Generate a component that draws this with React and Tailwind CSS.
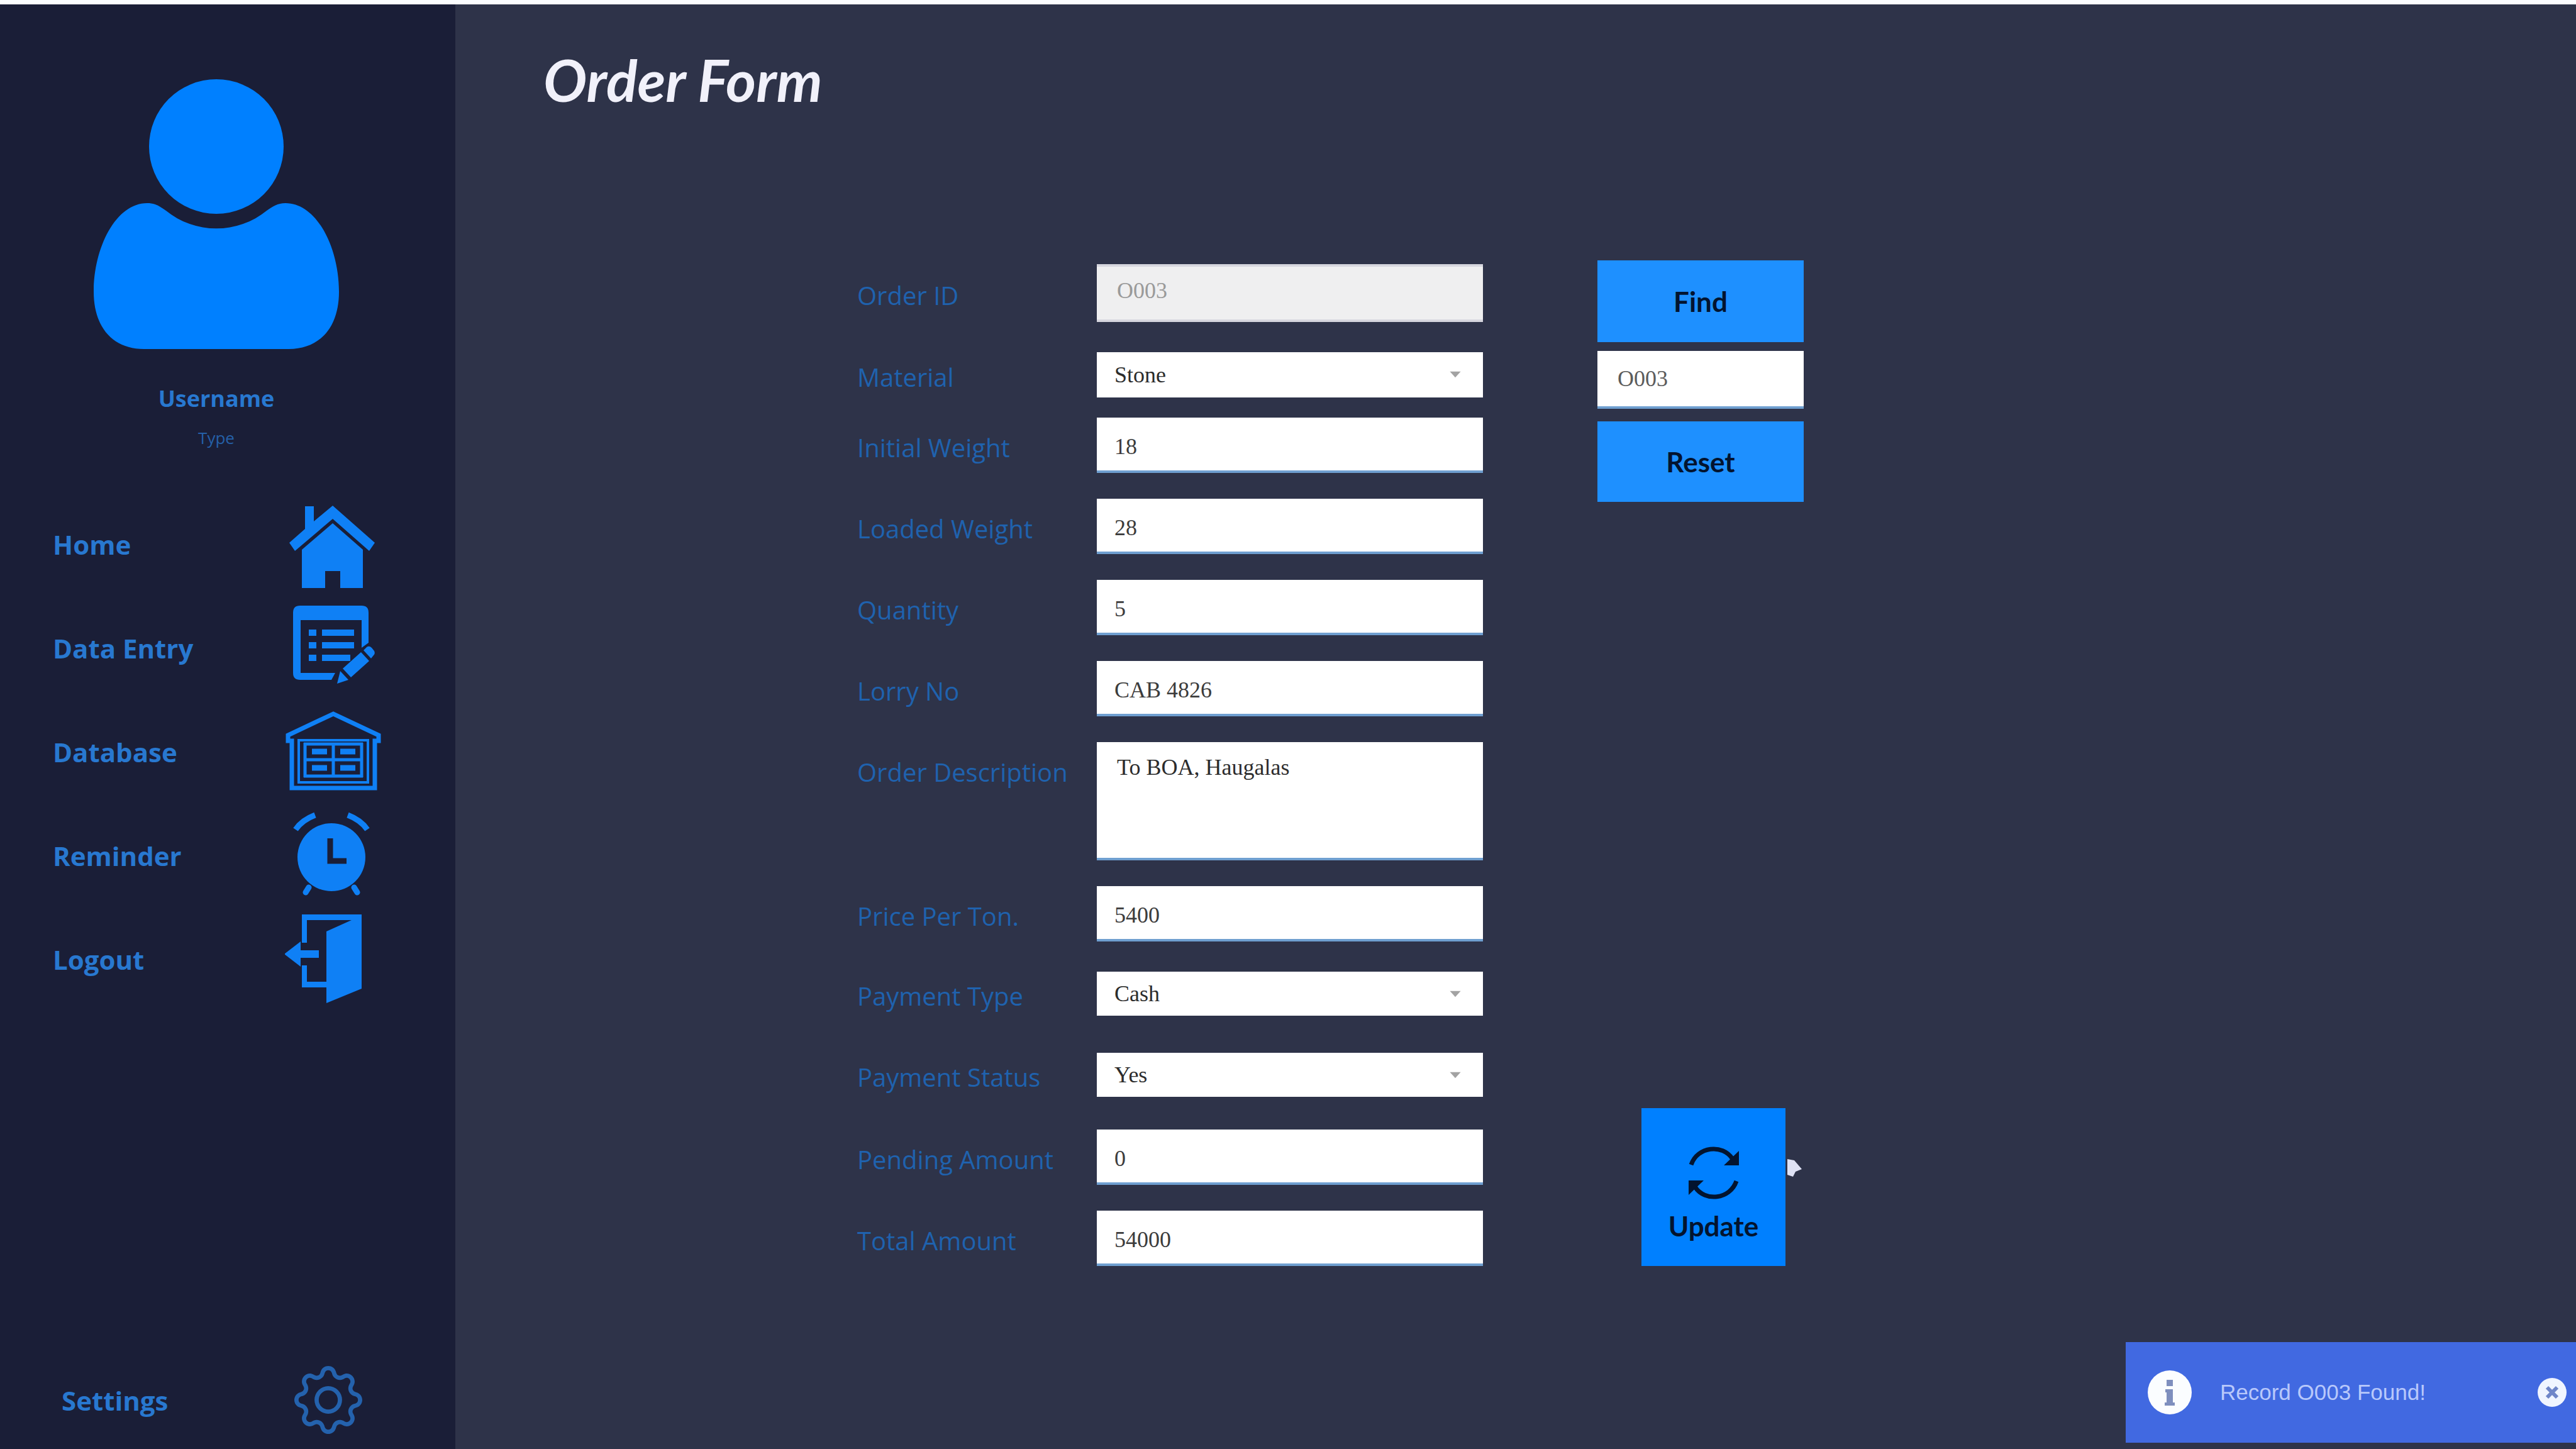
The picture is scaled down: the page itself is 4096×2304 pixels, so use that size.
import React from "react";
import { BsGear } from "react-icons/bs";

const INPUT =
  "h-[88px] w-full border-b-4 border-[#6f9fd0] bg-white px-7 pt-2 font-['Liberation_Serif'] text-[36px] text-[#3c3c3c] outline-none";
const SELECT =
  "w-full appearance-none bg-white px-7 font-['Liberation_Serif'] text-[36px] leading-[40px] text-[#2c2c2c] outline-none";

function HomeIcon() {
  return (
    <svg viewBox="0 0 150 150" className="size-[150px]" fill="currentColor" aria-hidden="true">
      <path d="M76 13 L143 72 L134 85 L76 34 L16 85 L7 72 L32 50 V14 H46 V38 Z" />
      <path d="M76 41 L124 83 V144 H88 V117 H64 V144 H27 V83 Z" />
    </svg>
  );
}

function DataEntryIcon() {
  return (
    <svg viewBox="0 0 150 150" className="size-[150px]" fill="currentColor" aria-hidden="true">
      <path d="M24 7 H122 Q133 7 133 18 V66 L122 74 V30 H25 V114 H80 L74 125 H24 Q13 125 13 114 V18 Q13 7 24 7 Z" />
      <path d="M38 45 H50 V55 H38 Z M59 45 H110 V55 H59 Z M38 65 H50 V75 H38 Z M59 65 H110 V75 H59 Z M38 85 H50 V95 H38 Z M59 85 H104 V95 H59 Z" />
      <path d="M92 107 L121 81 L134 95 L105 121 Z M125 78 L130 73 Q134 70 138 74 L142 79 Q144 83 141 86 L137 91 Z M88 111 L101 125 L83 131 Z" />
    </svg>
  );
}

function DatabaseIcon() {
  return (
    <svg viewBox="0 0 154 150" className="h-[150px] w-[154px]" fill="none" stroke="currentColor" strokeWidth="7" aria-hidden="true">
      <path d="M5 57 V48 L77 14 L149 48 V57 H143 V132 H11 V57 Z" />
      <path d="M22 123 V56 H132 V123 Z" strokeWidth="4" />
      <path d="M30 62 H124 M30 87 H124 M30 113 H124 M32 60 V115 M77 60 V115 M122 60 V115" strokeWidth="5" />
      <path d="M43 74 H67 M88 74 H112 M43 100 H67 M88 100 H112" strokeWidth="9" />
    </svg>
  );
}

function ClockIcon() {
  return (
    <svg viewBox="0 0 150 150" className="size-[150px]" aria-hidden="true">
      <path d="M17 33 Q27 18 48 10 M100 10 Q121 18 131 33" fill="none" stroke="currentColor" strokeWidth="9" />
      <circle cx="74" cy="77" r="54" fill="currentColor" />
      <path d="M38 125 L33 133 M110 125 L115 133" stroke="currentColor" strokeWidth="9" strokeLinecap="round" />
      <path d="M72 47 V83 H98" fill="none" stroke="#1a1e37" strokeWidth="9" />
    </svg>
  );
}

function LogoutIcon() {
  return (
    <svg viewBox="0 0 150 150" className="size-[150px]" fill="currentColor" aria-hidden="true">
      <path d="M27 3 H122 V121 L66 144 V119 H27 V84 H35 V110 H66 V30 L106 12 H35 V48 H27 Z" />
      <path d="M-1 66 L25 46 V60 H54 V72 H25 V86 Z" />
    </svg>
  );
}

function AvatarIcon() {
  return (
    <svg viewBox="0 0 390 432" className="h-[432px] w-[390px] text-[#0080ff]" fill="currentColor" aria-hidden="true">
      <circle cx="195" cy="109" r="107" />
      <path d="M115 211 A127 127 0 0 0 275 211 C285 204 292 199 305 199 C355 199 390 270 390 340 C390 396 360 431 310 431 H80 C30 431 0 396 0 340 C0 270 35 199 85 199 C98 199 105 204 115 211 Z" />
    </svg>
  );
}

function RefreshIcon() {
  return (
    <svg viewBox="0 0 84 92" className="h-[92px] w-[84px] text-[#03142f]" aria-hidden="true">
      <path d="M6 33 C16 4 56 -1 72 24 M78 59 C68 88 28 93 12 68" fill="none" stroke="currentColor" strokeWidth="7" />
      <path d="M82 11 V34 H58 Z M2 81 V58 H26 Z" fill="currentColor" />
    </svg>
  );
}

const NAV = [
  { name: "Home", Icon: HomeIcon },
  { name: "Data Entry", Icon: DataEntryIcon },
  { name: "Database", Icon: DatabaseIcon },
  { name: "Reminder", Icon: ClockIcon },
  { name: "Logout", Icon: LogoutIcon },
];

function Row({ id, label, gap = "mt-[41px]", top = false, children }) {
  return (
    <div className={`flex ${top ? "items-start" : "items-center"} ${gap}`}>
      <label
        htmlFor={id}
        className={`w-[381px] shrink-0 whitespace-nowrap text-[40px] leading-[56px] text-[#1f62ae] ${top ? "pt-5" : "pt-2"}`}
      >
        {label}
      </label>
      <div className="w-[614px]">{children}</div>
    </div>
  );
}

function Dropdown({ id, value, height = "h-[70px]" }) {
  return (
    <div className="relative">
      <select id={id} defaultValue={value} className={`${SELECT} ${height}`}>
        <option>{value}</option>
      </select>
      <svg viewBox="0 0 24 14" className="pointer-events-none absolute top-[30px] right-8 h-3 w-6" aria-hidden="true">
        <path d="M2 1 H22 L12 12 Z" fill="#a3a3a3" />
      </svg>
    </div>
  );
}

function Sidebar() {
  return (
    <aside className="flex w-[724px] shrink-0 flex-col bg-[#1a1e37] pt-[117px] text-[#2878d0]">
      <div className="ml-[149px] flex w-[390px] flex-col items-center">
        <AvatarIcon />
        <p className="mt-12 text-[36px] leading-[60px] font-bold">Username</p>
        <p className="mt-1 text-[26px] leading-[56px] text-[#2560a8]">Type</p>
      </div>
      <nav className="mt-[59px] flex flex-col">
        {NAV.map(({ name, Icon }) => (
          <a key={name} href="#" className="flex h-[165px] items-center pl-[84px] text-[42px] font-bold">
            <span className="w-[369px]">{name}</span>
            <span className="text-[#0f80f5]">
              <Icon />
            </span>
          </a>
        ))}
      </nav>
      <a href="#" className="mt-auto flex h-[156px] items-center pl-[98px] text-[42px] font-bold">
        <span className="w-[370px]">Settings</span>
        <BsGear className="size-[108px] text-[#2462ad]" />
      </a>
    </aside>
  );
}

export default function App() {
  return (
    <div className="flex min-h-screen flex-col bg-[#2e3349] font-['Open_Sans','Noto_Sans',sans-serif]">
      <div className="h-[7px] bg-[#fbfdff]" />
      <div className="flex flex-1">
        <Sidebar />
        <main className="flex-1">
          <h1 className="pt-[60px] pl-[140px] font-['Comic_Sans_MS','Lato',sans-serif] text-[92px] leading-[120px] font-bold text-[#f1f1fa] italic">
            Order Form
          </h1>
          <form className="mt-[227px] flex pl-[639px]" onSubmit={(e) => e.preventDefault()}>
            <div className="pt-[6px]">
              <Row id="order-id" label="Order ID" gap="mt-0">
                <input
                  id="order-id"
                  disabled
                  defaultValue="O003"
                  className="h-[92px] w-full border-y-4 border-[#d6d6de] bg-[#efeff0] px-8 pb-2 font-['Liberation_Serif'] text-[36px] text-[#9a9a9a]"
                />
              </Row>
              <Row id="material" label="Material" gap="mt-[48px]">
                <Dropdown id="material" value="Stone" height="h-[72px]" />
              </Row>
              <Row id="initial" label="Initial Weight" gap="mt-[32px]">
                <input id="initial" defaultValue="18" className={INPUT} />
              </Row>
              <Row id="loaded" label="Loaded Weight">
                <input id="loaded" defaultValue="28" className={INPUT} />
              </Row>
              <Row id="quantity" label="Quantity">
                <input id="quantity" defaultValue="5" className={INPUT} />
              </Row>
              <Row id="lorry" label="Lorry No">
                <input id="lorry" defaultValue="CAB 4826" className={INPUT} />
              </Row>
              <Row id="description" label="Order Description" top>
                <textarea
                  id="description"
                  defaultValue="To BOA, Haugalas"
                  className="block h-[188px] w-full resize-none border-b-4 border-[#6f9fd0] bg-white px-8 pt-5 font-['Liberation_Serif'] text-[36px] leading-[40px] text-[#2c2c2c] outline-none"
                />
              </Row>
              <Row id="price" label="Price Per Ton.">
                <input id="price" defaultValue="5400" className={INPUT} />
              </Row>
              <Row id="pay-type" label="Payment Type" gap="mt-[48px]">
                <Dropdown id="pay-type" value="Cash" />
              </Row>
              <Row id="pay-status" label="Payment Status" gap="mt-[59px]">
                <Dropdown id="pay-status" value="Yes" />
              </Row>
              <Row id="pending" label="Pending Amount" gap="mt-[52px]">
                <input id="pending" defaultValue="0" className={INPUT} />
              </Row>
              <Row id="total" label="Total Amount">
                <input id="total" defaultValue="54000" className={INPUT} />
              </Row>
            </div>
            <div className="ml-[182px] flex w-[328px] flex-col font-['Comic_Sans_MS','Lato',sans-serif] text-[44px] font-bold text-[#03142f]">
              <button type="button" className="h-[130px] bg-[#1e90ff]">
                Find
              </button>
              <input
                aria-label="Order to find"
                defaultValue="O003"
                className="mt-[14px] h-[92px] border-b-4 border-[#6f9fd0] bg-white px-8 font-['Liberation_Serif'] text-[36px] font-normal text-[#5c5c5c] outline-none"
              />
              <button type="button" className="mt-5 h-[128px] bg-[#1e90ff]">
                Reset
              </button>
              <div className="relative mt-auto ml-[70px] w-[229px]">
                <button type="submit" className="flex h-[251px] w-full flex-col items-center bg-[#0080ff] pt-[57px]">
                  <RefreshIcon />
                  <span className="mt-[10px] leading-[56px]">Update</span>
                </button>
                <svg viewBox="0 0 28 32" className="absolute top-[80px] left-full h-8 w-7" aria-hidden="true">
                  <path d="M3 1 L14 3 L26 17 L16 21 L12 29 L3 26 Z" fill="#dfe2f5" />
                </svg>
              </div>
            </div>
          </form>
        </main>
      </div>
      <div
        role="status"
        className="fixed right-0 bottom-[10px] flex h-[160px] w-[716px] items-center bg-[#4169e1] pr-[14px] pl-[34px] font-['Liberation_Sans',sans-serif] text-[35px] text-[#b8c8fb]"
      >
        <svg viewBox="0 0 72 72" className="size-[72px]" aria-hidden="true">
          <circle cx="36" cy="36" r="35" fill="#fbfdff" />
          <path d="M31 16 H41 V26 H31 Z M29 31 H41 V52 H44 V57 H28 V52 H31 V36 H29 Z" fill="#7f8fbe" />
        </svg>
        <span className="ml-[44px]">Record O003 Found!</span>
        <button type="button" aria-label="Dismiss" className="ml-auto">
          <svg viewBox="0 0 48 48" className="size-[48px]" aria-hidden="true">
            <circle cx="24" cy="24" r="23" fill="#f0f5ff" />
            <path d="M16 16 L32 32 M32 16 L16 32" stroke="#6f86c8" strokeWidth="6" />
          </svg>
        </button>
      </div>
    </div>
  );
}
